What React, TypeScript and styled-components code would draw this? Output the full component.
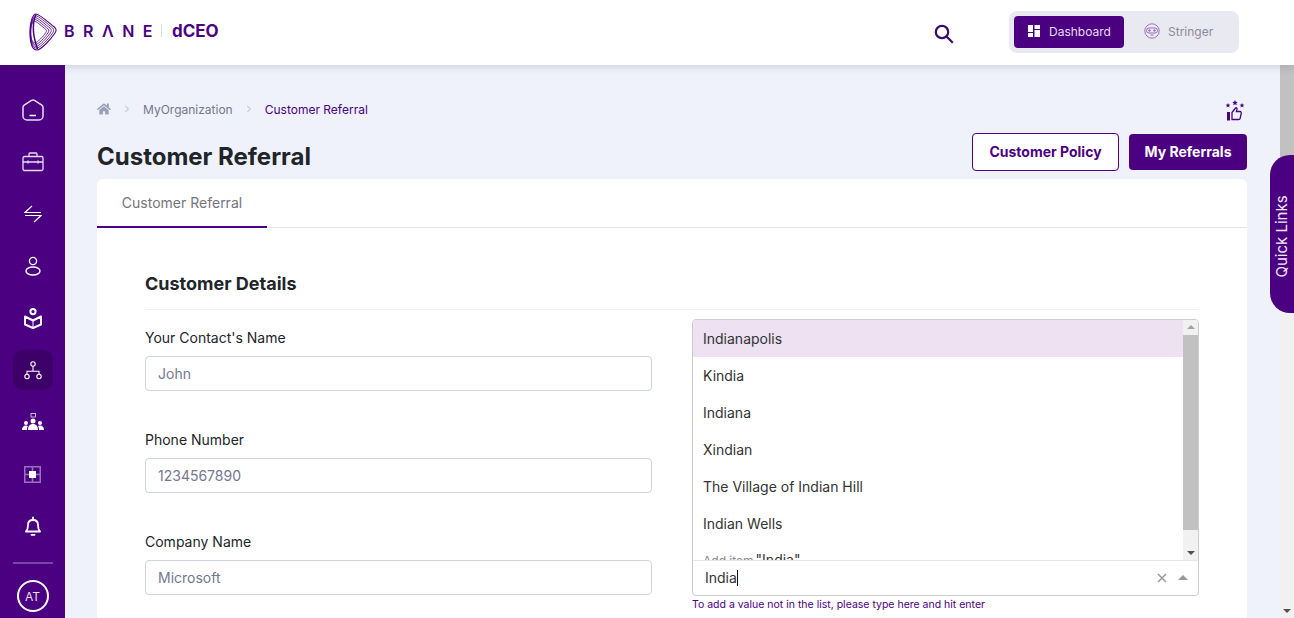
import React from "react";
import styled, { createGlobalStyle } from "styled-components";
import { FaHome, FaChevronRight } from "react-icons/fa";

const PURPLE = "#4b0082";

const cities = ["Indianapolis", "Kindia", "Indiana", "Xindian", "The Village of Indian Hill", "Indian Wells"];

const markScales = [1, 0.9, 0.8, 0.7, 0.6];

const BraneMark = () => (
  <svg width="28" height="38" viewBox="0 0 28 38" fill="none" stroke={PURPLE}>
    {markScales.map((s, i) => (
      <path
        key={s}
        transform={`translate(3 19) scale(${s}) translate(-3 -19)`}
        vectorEffect="non-scaling-stroke"
        strokeWidth={i === 0 ? 1.1 : 0.8}
        d="M7 1C4 1 1 8 1 19c0 10 2 18 7 18 4 0 14-11 18-17 2-3 1-5-2-7C18 8 10 1 7 1Z"
      />
    ))}
    <path d="M7 1.500C4.500 7 4 13 4.500 19c.5 6 2 11 4 17" strokeWidth="1.500" />
  </svg>
);

const HomeIcon = () => (
  <svg width="22" height="22" viewBox="0 0 22 22" fill="none" stroke="#e9ddf3" strokeWidth="1.500">
    <path d="M1 8.500c0-1 .4-1.700 1.200-2.300L9.500 1.400c1-.6 2-.6 3 0l7.300 4.800c.8.6 1.200 1.300 1.200 2.300V17a4 4 0 0 1-4 4H5a4 4 0 0 1-4-4Z" />
    <path d="M7.500 16.500h6.500" stroke="#fff" />
  </svg>
);

const CaseIcon = () => (
  <svg width="22" height="20" viewBox="0 0 22 20" fill="none" stroke="#e9ddf3" strokeWidth="1.300">
    <rect x="1" y="4.500" width="20" height="14" rx="1.500" />
    <path d="M7 4.500V2a1 1 0 0 1 1-1h6a1 1 0 0 1 1 1v2.500M1 10h20M6 8.500v3M16 8.500v3" />
  </svg>
);

const SwapIcon = () => (
  <svg width="18" height="18" viewBox="0 0 18 18" fill="none" stroke="#fff" strokeWidth="1.200">
    <path d="M8 1 1 7.500h16M10 17l7-6.500H1" />
  </svg>
);

const PersonIcon = () => (
  <svg width="16" height="20" viewBox="0 0 16 20" fill="none" stroke="#fff" strokeWidth="1.400">
    <circle cx="8" cy="5" r="3.600" />
    <ellipse cx="8" cy="15" rx="7" ry="4" />
  </svg>
);

const BookIcon = () => (
  <svg width="18" height="21" viewBox="0 0 18 21" fill="none" stroke="#fff" strokeWidth="2">
    <circle cx="9" cy="3.600" r="2.600" />
    <path d="M1 8.500 9 12.500l8-4V16.500l-8 3.500-8-3.500Z" strokeLinejoin="round" />
    <path d="M9 12.500v7" strokeWidth="1" />
  </svg>
);

const TreeIcon = () => (
  <svg width="18" height="19" viewBox="0 0 18 19" fill="none" stroke="#fff" strokeWidth="1.100">
    <circle cx="9" cy="3" r="2.200" />
    <circle cx="3" cy="15.500" r="2.200" />
    <circle cx="15" cy="15.500" r="2.200" />
    <path d="M9 5.200v5M3 13.300v-3h12v3" />
  </svg>
);

const TeamIcon = () => (
  <svg width="22" height="19" viewBox="0 0 22 19" fill="#fff">
    <rect x="9" y="0.500" width="4.500" height="3.500" fill="none" stroke="#fff" strokeWidth="0.700" />
    <circle cx="11" cy="8" r="2.500" />
    <circle cx="4" cy="10" r="2" />
    <circle cx="18" cy="10" r="2" />
    <path d="M6 17c0-4 2-6 5-6s5 2 5 6ZM0 17c0-3 1.500-4.500 4-4.500 1 0 1.500.2 2 .5-.8 1-1 2.500-1 4ZM22 17c0-3-1.500-4.500-4-4.500-1 0-1.500.2-2 .5.800 1 1 2.500 1 4Z" />
  </svg>
);

const ChipIcon = () => (
  <svg width="17" height="17" viewBox="0 0 17 17" fill="none">
    <rect x="0.750" y="0.750" width="15.500" height="15.500" stroke="#9a70bf" strokeWidth="1.500" />
    <path d="M8.500 0v17M0 8.500h17" stroke="#9a70bf" strokeWidth="1.500" />
    <rect x="5" y="5" width="7" height="7" fill="#fff" />
  </svg>
);

const BellIcon = () => (
  <svg width="16" height="20" viewBox="0 0 16 20" fill="none" stroke="#fff" strokeWidth="1.800">
    <path d="M1 15.500h14c-1.500-1.500-2-3-2-6.500 0-3-2-5-5-5S3 6 3 9c0 3.500-.5 5-2 6.500Z" strokeLinejoin="round" />
    <path d="M8 4V1.500M6.500 18.800h3" strokeLinecap="round" />
  </svg>
);

const SearchIcon = () => (
  <svg width="20" height="20" viewBox="0 0 20 20" fill="none" stroke="#3b0a6b" strokeWidth="2.200">
    <circle cx="8" cy="8" r="6.200" />
    <path d="m12.500 12.500 6.300 6.300" />
  </svg>
);

const TilesIcon = () => (
  <svg width="12" height="12" viewBox="0 0 12 12" fill="#fff">
    <rect x="0" y="0" width="5" height="7" />
    <rect x="0" y="8" width="5" height="4" />
    <rect x="6.500" y="0" width="5.500" height="4" />
    <rect x="6.500" y="5" width="5.500" height="7" />
  </svg>
);

const RobotIcon = () => (
  <svg width="16" height="16" viewBox="0 0 16 16" fill="none" stroke="#9a70bf" strokeWidth="1">
    <circle cx="8" cy="8" r="7.200" />
    <rect x="2.500" y="5" width="11" height="5" rx="2.500" />
    <circle cx="5.500" cy="7.500" r="0.800" fill="#9a70bf" />
    <circle cx="10.500" cy="7.500" r="0.800" fill="#9a70bf" />
    <path d="M6.500 12h3" />
  </svg>
);

const ThumbStarsIcon = () => (
  <svg width="20" height="21" viewBox="0 0 20 21" fill={PURPLE}>
    <path d="m10 0 .8 1.800 1.900.2-1.400 1.300.4 1.900L10 4.200l-1.700 1 .4-1.900L7.300 2l1.900-.2ZM3 3l.7 1.500 1.600.2-1.200 1.100.3 1.600L3 6.600l-1.400.8.300-1.600L.7 4.700l1.600-.2ZM17 3l.7 1.500 1.600.2-1.200 1.100.3 1.600-1.400-.8-1.400.8.300-1.600-1.200-1.100 1.600-.2Z" />
    <rect x="2" y="12" width="3" height="8.500" />
    <path d="M7 12.500 10.500 8c.5-.7 1.800-.2 1.500 1l-.6 2.500h3.600c1 0 1.500.8 1.300 1.700l-1.200 5.300c-.2.700-.7 1-1.300 1H7Z" fill="none" stroke={PURPLE} strokeWidth="1.300" />
  </svg>
);

const GlobalStyle = createGlobalStyle`
  html, body {
    margin: 0;
    padding: 0;
    height: 100%;
    overflow: hidden;
  }
  * {
    box-sizing: border-box;
  }
  body {
    font-family: Inter, "Liberation Sans", sans-serif;
    color: #212529;
  }
`;

const Page = styled.div`
  width: 1294px;
  height: 618px;
  display: flex;
  flex-direction: column;
  overflow: hidden;
  position: relative;
  background: #eff2fa;
`;

const Header = styled.header`
  height: 65px;
  flex: none;
  display: flex;
  align-items: center;
  background: #fff;
  box-shadow: 0 2px 8px rgba(60, 60, 90, 0.18);
  position: relative;
  z-index: 2;
  padding: 0 55px 0 29px;
`;

const Logo = styled.div`
  display: flex;
  align-items: center;
  margin-top: -2px;
  color: ${PURPLE};
`;

const BrandName = styled.span`
  font-size: 16px;
  font-weight: 600;
  letter-spacing: 8.500px;
  margin: -2px 0 0 7px;
`;

const BrandDivider = styled.span`
  width: 1px;
  height: 13px;
  margin: -2px 10px 0 0;
  background: #ddd;
`;

const Product = styled.span`
  font-size: 17px;
  font-weight: 700;
  margin-top: -2px;
`;

const SearchButton = styled.div`
  margin-left: auto;
  display: flex;
  margin-top: 2px;
`;

const Switcher = styled.div`
  margin-left: 55px;
  margin-top: -2px;
  width: 230px;
  height: 42px;
  border-radius: 8px;
  background: #e9e9f1;
  padding: 5px;
  display: flex;
  align-items: center;
`;

const SwitchItem = styled.div<{ $active?: boolean }>`
  height: 32px;
  flex: none;
  width: 110px;
  border-radius: 4px;
  display: flex;
  align-items: center;
  gap: ${(p) => (p.$active ? "9px" : "8px")};
  padding-left: ${(p) => (p.$active ? "14px" : "20px")};
  padding-bottom: 1px;
  font-size: 12px;
  background: ${(p) => (p.$active ? PURPLE : "transparent")};
  color: ${(p) => (p.$active ? "#e9ddf3" : "#8b8b9b")};
`;

const Body = styled.div`
  flex: 1;
  display: flex;
  min-height: 0;
`;

const Sidebar = styled.nav`
  width: 65px;
  flex: none;
  background: ${PURPLE};
  display: flex;
  flex-direction: column;
  align-items: center;
  padding-top: 25px;
`;

const NavItem = styled.div<{ $active?: boolean }>`
  width: 40px;
  height: 40px;
  flex: none;
  margin-bottom: 12px;
  border-radius: 10px;
  display: flex;
  align-items: center;
  justify-content: center;
  background: ${(p) => (p.$active ? "#3c0068" : "transparent")};
`;

const NavRule = styled.div`
  width: 40px;
  height: 2px;
  margin-top: 4px;
  background: #7a46a5;
  flex: none;
`;

const Avatar = styled.div`
  width: 32px;
  height: 32px;
  flex: none;
  margin-top: 16px;
  border: 2px solid #fff;
  border-radius: 50%;
  display: flex;
  align-items: center;
  justify-content: center;
  color: #e9ddf3;
  font-size: 12px;
`;

const Main = styled.main`
  flex: 1;
  min-width: 0;
  padding: 34px 33px 0 32px;
  overflow: hidden;
`;

const Crumbs = styled.div`
  height: 20px;
  display: flex;
  align-items: center;
  font-size: 12px;
  color: #74788d;
  justify-content: flex-start;
`;

const CrumbSep = styled.span`
  display: flex;
  margin: 0 12px;
  color: #ccd;
`;

const CrumbCurrent = styled.span`
  color: ${PURPLE};
`;

const CrumbEnd = styled.span`
  margin-left: auto;
  display: flex;
  margin-right: 2px;
  margin-top: 3px;
`;

const TitleRow = styled.div`
  display: flex;
  align-items: flex-start;
  justify-content: space-between;
  height: 56px;
  margin-top: 4px;
`;

const Title = styled.h1`
  margin: 16px 0 0;
  font-size: 24px;
  line-height: 36px;
  font-weight: 700;
  color: #212529;
`;

const Actions = styled.div`
  display: flex;
  gap: 10px;
  padding-top: 10px;
`;

const OutlineButton = styled.button`
  height: 38px;
  width: 147px;
  padding: 0 0 2px;
  background: #fff;
  border: 1px solid ${PURPLE};
  border-radius: 4px;
  color: ${PURPLE};
  font: 700 14px Inter, sans-serif;
`;

const SolidButton = styled.button`
  height: 36px;
  width: 118px;
  margin-top: 1px;
  padding: 0 0 2px;
  background: ${PURPLE};
  border: 0;
  border-radius: 4px;
  color: #fff;
  font: 700 14px Inter, sans-serif;
`;

const Card = styled.section`
  background: #fff;
  border-radius: 6px 6px 0 0;
  height: 500px;
`;

const Tabs = styled.div`
  height: 49px;
  border-bottom: 1px solid #e2e2e8;
  display: flex;
`;

const Tab = styled.div`
  width: 170px;
  height: 49px;
  border-bottom: 2px solid ${PURPLE};
  text-align: center;
  font-size: 14px;
  line-height: 47px;
  color: #74747c;
`;

const CardBody = styled.div`
  padding: 43px 48px 0;
`;

const SectionTitle = styled.h2`
  margin: 0;
  font-size: 18px;
  line-height: 26px;
  font-weight: 700;
  padding-bottom: 12px;
  border-bottom: 1px solid #eff0f2;
  color: #212529;
`;

const FormGrid = styled.div`
  display: grid;
  grid-template-columns: 507px 507px;
  column-gap: 40px;
  padding-top: 9px;
`;

const LeftColumn = styled.div`
  display: flex;
  flex-direction: column;
  gap: 19px;
`;

const Field = styled.div`
  height: 83px;
`;

const Label = styled.label`
  display: block;
  font-size: 14px;
  line-height: 21px;
  margin-top: 8px;
  margin-bottom: 8px;
  color: #212529;
`;

const Input = styled.input`
  display: block;
  width: 100%;
  height: 35px;
  border: 1px solid #ced4da;
  border-radius: 4px;
  padding: 0 12px;
  font: 400 14px Inter, sans-serif;
  &::placeholder {
    color: #74788d;
    opacity: 1;
  }
`;

const SelectBox = styled.div`
  height: 277px;
  border: 1px solid #ccc;
  border-radius: 4px;
  display: flex;
  flex-direction: column;
  overflow: hidden;
`;

const ListArea = styled.div`
  height: 241px;
  flex: none;
  display: flex;
  border-bottom: 1px solid #e8e8e8;
  min-height: 0;
`;

const OptionList = styled.div`
  flex: 1;
  min-width: 0;
  overflow: hidden;
`;

const Option = styled.div<{ $active?: boolean }>`
  height: 37px;
  padding-left: 10px;
  font-size: 14px;
  line-height: 37px;
  color: #333;
  background: ${(p) => (p.$active ? "#ede1f2" : "#fff")};
`;

const AddOption = styled.div`
  height: 37px;
  padding-left: 10px;
  font-size: 14px;
  line-height: 35px;
  color: #333;
`;

const AddLabel = styled.span`
  font-size: 12px;
  margin-right: 2px;
  color: #8a8a8a;
`;

const Track = styled.div`
  width: 15px;
  flex: none;
  background: #f1f1f1;
  display: flex;
  flex-direction: column;
  align-items: center;
  justify-content: space-between;
`;

const ThumbArea = styled.div`
  flex: 1;
  width: 100%;
  min-height: 0;
`;

const ListThumbArea = styled(ThumbArea)`
  padding-top: 1px;
`;

const Thumb = styled.div<{ $height: number }>`
  width: 100%;
  height: ${(p) => p.$height}px;
  background: #c1c1c1;
`;

const Arrow = styled.div<{ $down?: boolean; $color?: string; $size?: number }>`
  width: 0;
  height: 0;
  flex: none;
  margin: 5px 0;
  border-left: ${(p) => p.$size ?? 4}px solid transparent;
  border-right: ${(p) => p.$size ?? 4}px solid transparent;
  ${(p) => (p.$down ? "border-top" : "border-bottom")}: ${(p) => p.$size ?? 4}px solid ${(p) => p.$color ?? "#505050"};
`;

const SelectInput = styled.div`
  flex: 1;
  display: flex;
  align-items: center;
  padding: 0 10px 1px 12px;
  font-size: 14px;
  color: #333;
`;

const Caret = styled.span`
  width: 1px;
  height: 16px;
  background: #111;
`;

const Clear = styled.span`
  margin-left: auto;
  margin-right: 11px;
  display: flex;
`;

const Hint = styled.div`
  font-size: 10.500px;
  line-height: 15px;
  margin-top: 1px;
  color: ${PURPLE};
`;

const PageScroll = styled.div`
  width: 14px;
  flex: none;
  background: #f1f1f1;
  display: flex;
  flex-direction: column;
  align-items: center;
`;

const QuickLinks = styled.div`
  position: absolute;
  top: 155px;
  right: 0;
  width: 24px;
  height: 158px;
  background: ${PURPLE};
  border-radius: 20px 0 0 20px;
  display: flex;
  align-items: center;
  justify-content: center;
  padding: 5px 1px 0 0;
  color: #f0e8f6;
  font-size: 15px;
  z-index: 3;
`;

const QuickLabel = styled.span`
  transform: rotate(-90deg);
  white-space: nowrap;
`;

export default function App() {
  return (
    <Page>
      <GlobalStyle />
      <Header>
        <Logo>
          <BraneMark />
          <BrandName>BRΛNE</BrandName>
          <BrandDivider />
          <Product>dCEO</Product>
        </Logo>
        <SearchButton>
          <SearchIcon />
        </SearchButton>
        <Switcher>
          <SwitchItem $active>
            <TilesIcon />
            Dashboard
          </SwitchItem>
          <SwitchItem>
            <RobotIcon />
            Stringer
          </SwitchItem>
        </Switcher>
      </Header>
      <Body>
        <Sidebar>
          <NavItem><HomeIcon /></NavItem>
          <NavItem><CaseIcon /></NavItem>
          <NavItem><SwapIcon /></NavItem>
          <NavItem><PersonIcon /></NavItem>
          <NavItem><BookIcon /></NavItem>
          <NavItem $active><TreeIcon /></NavItem>
          <NavItem><TeamIcon /></NavItem>
          <NavItem><ChipIcon /></NavItem>
          <NavItem><BellIcon /></NavItem>
          <NavRule />
          <Avatar>AT</Avatar>
        </Sidebar>
        <Main>
          <Crumbs>
            <FaHome size={14} color="#9aa0b4" />
            <CrumbSep><FaChevronRight size={8} /></CrumbSep>
            MyOrganization
            <CrumbSep><FaChevronRight size={8} /></CrumbSep>
            <CrumbCurrent>Customer Referral</CrumbCurrent>
            <CrumbEnd><ThumbStarsIcon /></CrumbEnd>
          </Crumbs>
          <TitleRow>
            <Title>Customer Referral</Title>
            <Actions>
              <OutlineButton>Customer Policy</OutlineButton>
              <SolidButton>My Referrals</SolidButton>
            </Actions>
          </TitleRow>
          <Card>
            <Tabs>
              <Tab>Customer Referral</Tab>
            </Tabs>
            <CardBody>
              <SectionTitle>Customer Details</SectionTitle>
              <FormGrid>
                <LeftColumn>
                  <Field>
                    <Label>Your Contact's Name</Label>
                    <Input placeholder="John" />
                  </Field>
                  <Field>
                    <Label>Phone Number</Label>
                    <Input placeholder="1234567890" />
                  </Field>
                  <Field>
                    <Label>Company Name</Label>
                    <Input placeholder="Microsoft" />
                  </Field>
                </LeftColumn>
                <div>
                  <SelectBox>
                    <ListArea>
                      <OptionList>
                        {cities.map((city, i) => (
                          <Option key={city} $active={i === 0}>{city}</Option>
                        ))}
                        <AddOption><AddLabel>Add item</AddLabel>"India"</AddOption>
                      </OptionList>
                      <Track>
                        <Arrow $color="#a3a3a3" />
                        <ListThumbArea><Thumb $height={195} /></ListThumbArea>
                        <Arrow $down />
                      </Track>
                    </ListArea>
                    <SelectInput>
                      India<Caret />
                      <Clear>
                        <svg width="10" height="10" viewBox="0 0 10 10" stroke="#999" strokeWidth="1.500">
                          <path d="m1 1 8 8M9 1l-8 8" />
                        </svg>
                      </Clear>
                      <Arrow $color="#999" $size={5} />
                    </SelectInput>
                  </SelectBox>
                  <Hint>To add a value not in the list, please type here and hit enter</Hint>
                </div>
              </FormGrid>
            </CardBody>
          </Card>
        </Main>
        <PageScroll>
          <ThumbArea><Thumb $height={230} /></ThumbArea>
          <Arrow $down />
        </PageScroll>
      </Body>
      <QuickLinks>
        <QuickLabel>Quick Links</QuickLabel>
      </QuickLinks>
    </Page>
  );
}
